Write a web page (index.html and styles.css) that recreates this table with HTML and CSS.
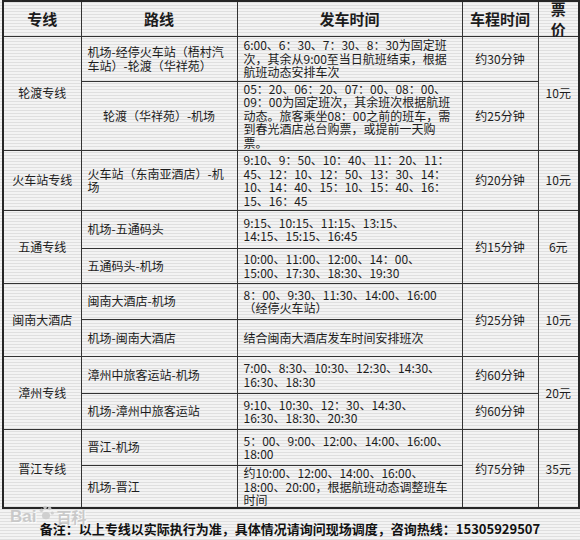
FILE: index.html
```html
<!DOCTYPE html>
<html lang="zh-CN">
<head>
<meta charset="utf-8">
<title>机场专线</title>
<link rel="stylesheet" href="styles.css">
</head>
<body>
<div class="page">
  <table class="schedule">
    <colgroup>
      <col class="c-line"><col class="c-route"><col class="c-time"><col class="c-dur"><col class="c-price">
    </colgroup>
    <thead>
      <tr class="h-head">
        <th>专线</th><th>路线</th><th>发车时间</th><th>车程时间</th><th class="th-price"><div class="stack">票<br>价</div></th>
      </tr>
    </thead>
    <tbody>
      <tr class="r1">
        <td rowspan="2" class="line">轮渡专线</td>
        <td class="route">机场-经停火车站（梧村汽<br>车站）-轮渡（华祥苑）</td>
        <td class="times">6:00、6：30、7：30、8：30为固定班<br>次，其余从9:00至当日航班结束，根据<br>航班动态安排车次</td>
        <td class="dur">约30分钟</td>
        <td rowspan="2" class="price">10元</td>
      </tr>
      <tr class="r2">
        <td class="route center">轮渡（华祥苑）-机场</td>
        <td class="times">05：20、06：20、07：00、08：00、<br>09：00为固定班次，其余班次根据航班<br>动态。旅客乘坐08：00之前的班车，需<br>到春光酒店总台购票，或提前一天购<br>票。</td>
        <td class="dur">约25分钟</td>
      </tr>
      <tr class="r3">
        <td class="line">火车站专线</td>
        <td class="route">火车站（东南亚酒店）-机<br>场</td>
        <td class="times">9:10、9：50、10：40、11：20、11：<br>45、12：10、12：50、13：30、14：<br>10、14：40、15：10、15：40、16：<br>15、16：45</td>
        <td class="dur">约20分钟</td>
        <td class="price">10元</td>
      </tr>
      <tr class="r4">
        <td rowspan="2" class="line">五通专线</td>
        <td class="route">机场-五通码头</td>
        <td class="times">9:15、10:15、11:15、13:15、<br>14:15、15:15、16:45</td>
        <td rowspan="2" class="dur">约15分钟</td>
        <td rowspan="2" class="price">6元</td>
      </tr>
      <tr class="r5">
        <td class="route">五通码头-机场</td>
        <td class="times">10:00、11:00、12:00、14：00、<br>15:00、17:30、18:30、19:30</td>
      </tr>
      <tr class="r6">
        <td rowspan="2" class="line">闽南大酒店</td>
        <td class="route">闽南大酒店-机场</td>
        <td class="times">8：00、9:30、11:30、14:00、16:00<br>（经停火车站）</td>
        <td rowspan="2" class="dur">约25分钟</td>
        <td rowspan="2" class="price">10元</td>
      </tr>
      <tr class="r7">
        <td class="route">机场-闽南大酒店</td>
        <td class="times">结合闽南大酒店发车时间安排班次</td>
      </tr>
      <tr class="r8">
        <td rowspan="2" class="line">漳州专线</td>
        <td class="route">漳州中旅客运站-机场</td>
        <td class="times">7:00、8:30、10:30、12:30、14:30、<br>16:30、18:30</td>
        <td class="dur">约60分钟</td>
        <td rowspan="2" class="price">20元</td>
      </tr>
      <tr class="r9">
        <td class="route">机场-漳州中旅客运站</td>
        <td class="times">9:10、10:30、12：30、14:30、<br>16:30、18:30、20:30</td>
        <td class="dur">约60分钟</td>
      </tr>
      <tr class="r10">
        <td rowspan="2" class="line">晋江专线</td>
        <td class="route">晋江-机场</td>
        <td class="times">5：00、9:00、12:00、14:00、16:00、<br>18:00</td>
        <td rowspan="2" class="dur">约75分钟</td>
        <td rowspan="2" class="price">35元</td>
      </tr>
      <tr class="r11">
        <td class="route">机场-晋江</td>
        <td class="times">约10:00、12:00、14:00、16:00、<br>18:00、20:00，根据航班动态调整班车<br>时间</td>
      </tr>
    </tbody>
  </table>
  <p class="note">备注：以上专线以实际执行为准，具体情况请询问现场调度，咨询热线：15305929507</p>
  <div class="watermark"><span class="wm-bai">Bai</span><svg class="wm-paw" viewBox="0 0 20 20" width="18" height="18"><ellipse cx="10" cy="13" rx="4.5" ry="4" fill="#cdcdcd"/><circle cx="5" cy="7" r="2" fill="#cdcdcd"/><circle cx="9" cy="4" r="2" fill="#cdcdcd"/><circle cx="14" cy="5" r="2" fill="#cdcdcd"/><circle cx="17" cy="10" r="1.8" fill="#cdcdcd"/></svg><span class="wm-bk">百科</span></div>
</div>
</body>
</html>
```

FILE: styles.css
```css
html, body {
  margin: 0;
  padding: 0;
}
body {
  width: 580px;
  height: 540px;
  overflow: hidden;
  background: repeating-linear-gradient(to bottom, #f3f3f3 0, #f3f3f3 2px, #dfdfdf 2px, #dfdfdf 3px);
  font-family: "Noto Sans CJK SC", "Noto Sans", sans-serif;
  color: #1c1c1c;
}
.page {
  position: relative;
  padding: 0 2px;
}
.schedule {
  width: 576px;
  table-layout: fixed;
  border-collapse: collapse;
  border: 2px solid #262626;
  font-size: 12px;
  line-height: 13.5px;
}
.c-line { width: 78px; }
.c-route { width: 156px; }
.c-time { width: 225px; }
.c-dur { width: 76px; }
.c-price { width: 41px; }

.schedule th,
.schedule td {
  border: 1px solid #333;
  padding: 0;
  vertical-align: middle;
}
.schedule th {
  font-size: 15px;
  font-weight: 700;
  text-align: center;
  line-height: 17px;
}
.stack {
  line-height: 20px;
  margin: -6px 0 -6px;
}
.h-head { height: 35px; }
.r1 { height: 45px; }
.r2 { height: 69px; }
.r3 { height: 60px; }
.r4 { height: 38px; }
.r5 { height: 35px; }
.r6 { height: 36px; }
.r7 { height: 37px; }
.r8 { height: 37px; }
.r9 { height: 36px; }
.r10 { height: 36px; }
.r11 { height: 43px; }

.line, .dur, .price {
  text-align: center;
}
.route {
  padding: 0 4px 0 6px !important;
  white-space: nowrap;
}
.route.center {
  text-align: center;
  padding: 0 !important;
}
.times {
  padding: 0 4px 0 6px !important;
  white-space: nowrap;
}
.note {
  margin: 12px 0 0;
  text-align: center;
  font-size: 13px;
  font-weight: 700;
  line-height: 16px;
  color: #111;
}
.watermark {
  position: absolute;
  left: 10px;
  top: 506px;
  display: flex;
  align-items: center;
  gap: 1px;
  color: #c6c6c6;
  text-shadow: 1px 1px 0 #fff;
  font-family: "Liberation Sans", sans-serif;
  font-size: 17px;
  font-weight: 700;
  opacity: 0.9;
}
.wm-paw { margin-top: -8px; }
.wm-bk {
  font-family: "Noto Sans CJK SC", sans-serif;
  font-size: 15px;
}
```
